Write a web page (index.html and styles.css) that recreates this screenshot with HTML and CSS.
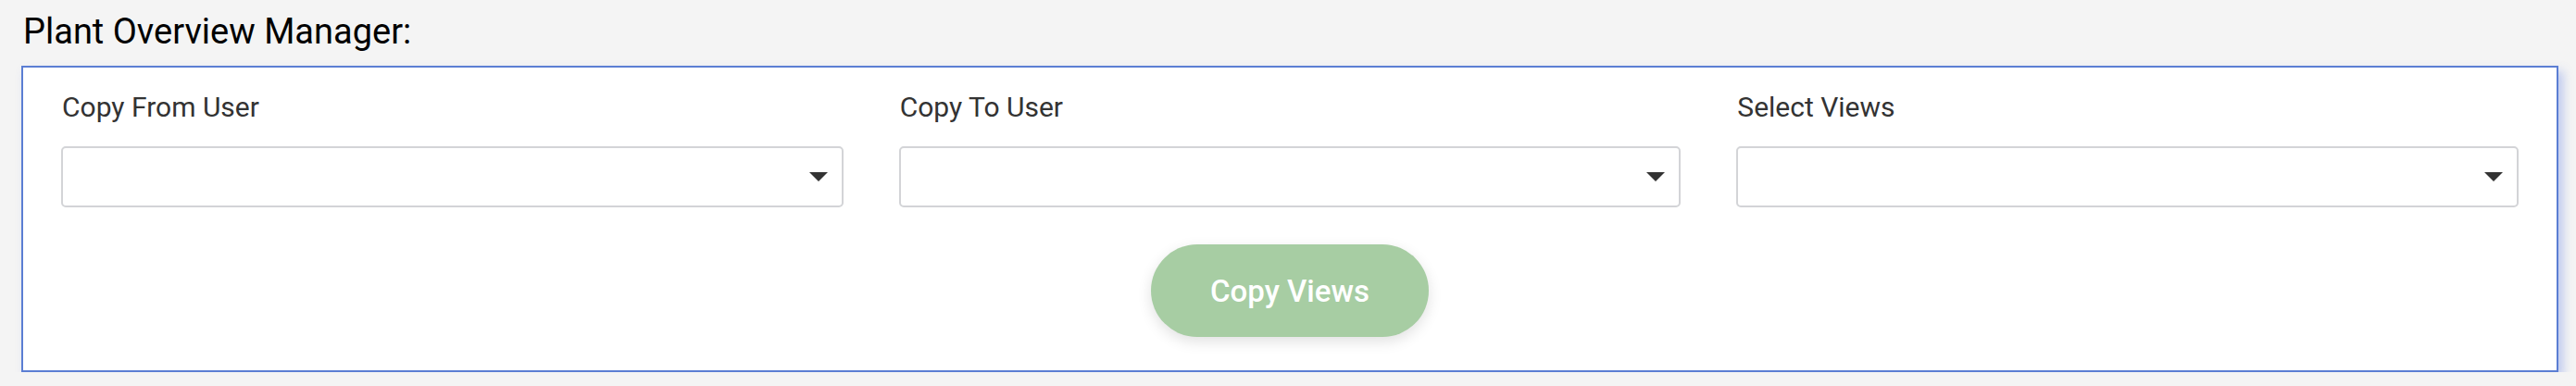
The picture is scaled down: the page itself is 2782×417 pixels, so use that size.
FILE: index.html
```html
<!DOCTYPE html>
<html lang="en">
<head>
<meta charset="utf-8">
<title>Plant Overview Manager</title>
<link rel="stylesheet" href="styles.css">
</head>
<body>
  <h1 class="page-title">Plant Overview Manager:</h1>
  <section class="panel">
    <div class="fields">
      <div class="field">
        <label class="field-label">Copy From User</label>
        <div class="select">
          <svg class="caret" width="20" height="10" viewBox="0 0 20 10"><path d="M0 0H20L10 10Z" fill="#333"/></svg>
        </div>
      </div>
      <div class="field">
        <label class="field-label">Copy To User</label>
        <div class="select">
          <svg class="caret" width="20" height="10" viewBox="0 0 20 10"><path d="M0 0H20L10 10Z" fill="#333"/></svg>
        </div>
      </div>
      <div class="field">
        <label class="field-label">Select Views</label>
        <div class="select">
          <svg class="caret" width="20" height="10" viewBox="0 0 20 10"><path d="M0 0H20L10 10Z" fill="#333"/></svg>
        </div>
      </div>
    </div>
    <button class="copy-btn" type="button">Copy Views</button>
  </section>
</body>
</html>
```
FILE: styles.css
```css
* { box-sizing: border-box; }

html, body {
  margin: 0;
  background: #f4f4f4;
}

body {
  padding: 15px 19px 0 23px;
  font-family: Roboto, "Liberation Sans", sans-serif;
}

.page-title {
  margin: 0 0 18px 2px;
  font-size: 38px;
  line-height: 38px;
  font-weight: 400;
  color: #000;
}

.panel {
  width: 2740px;
  background: #fff;
  border: 2px solid #5b7ed3;
  box-shadow: 5px 6px 10px rgba(90, 120, 230, 0.35);
  padding: 28px 41px 36px;
}

.fields {
  display: grid;
  grid-template-columns: repeat(3, 1fr);
  column-gap: 60px;
}

.field {
  display: flex;
  flex-direction: column;
}

.field-label {
  display: block;
  font-size: 30px;
  line-height: 30px;
  color: #333;
  margin: 0 0 27px 1px;
}

.select {
  height: 66px;
  border: 2px solid #d3d4d7;
  border-radius: 5px;
  background: #fff;
  display: flex;
  align-items: center;
  justify-content: flex-end;
  padding-right: 15px;
}

.caret { display: block; }

.copy-btn {
  display: flex;
  align-items: center;
  justify-content: center;
  width: 300px;
  height: 100px;
  margin: 40px auto 0;
  border: none;
  border-radius: 50px;
  background: #a7cda3;
  color: #fff;
  font-family: Roboto, "Liberation Sans", sans-serif;
  font-size: 33px;
  font-weight: 500;
  box-shadow: 0 5px 15px rgba(0, 0, 0, 0.12);
  cursor: pointer;
}
```
